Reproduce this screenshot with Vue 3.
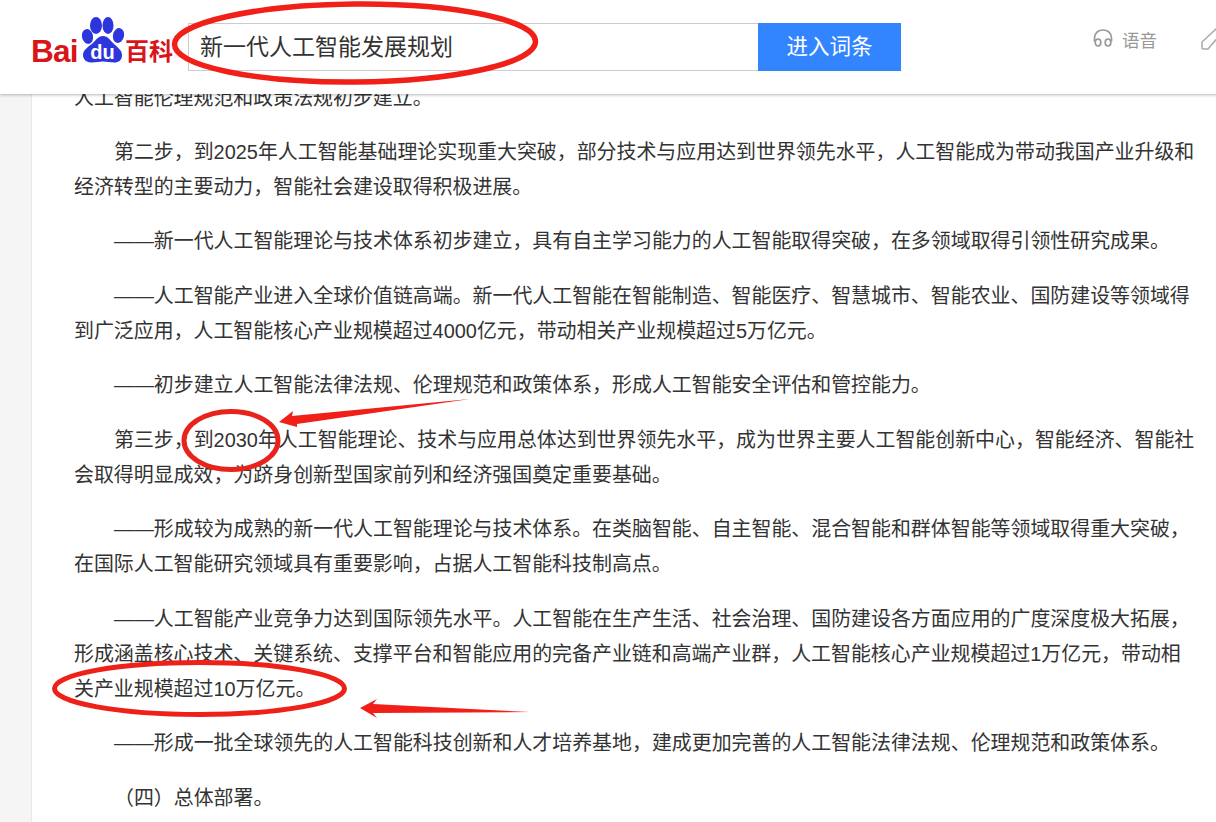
<script setup>
const paragraphs = [
  { text: '人工智能伦理规范和政策法规初步建立。', flush: true },
  { text: '第二步，到2025年人工智能基础理论实现重大突破，部分技术与应用达到世界领先水平，人工智能成为带动我国产业升级和经济转型的主要动力，智能社会建设取得积极进展。' },
  { text: '——新一代人工智能理论与技术体系初步建立，具有自主学习能力的人工智能取得突破，在多领域取得引领性研究成果。' },
  { text: '——人工智能产业进入全球价值链高端。新一代人工智能在智能制造、智能医疗、智慧城市、智能农业、国防建设等领域得到广泛应用，人工智能核心产业规模超过4000亿元，带动相关产业规模超过5万亿元。' },
  { text: '——初步建立人工智能法律法规、伦理规范和政策体系，形成人工智能安全评估和管控能力。' },
  { text: '第三步，到2030年人工智能理论、技术与应用总体达到世界领先水平，成为世界主要人工智能创新中心，智能经济、智能社会取得明显成效，为跻身创新型国家前列和经济强国奠定重要基础。' },
  { text: '——形成较为成熟的新一代人工智能理论与技术体系。在类脑智能、自主智能、混合智能和群体智能等领域取得重大突破，在国际人工智能研究领域具有重要影响，占据人工智能科技制高点。' },
  { text: '——人工智能产业竞争力达到国际领先水平。人工智能在生产生活、社会治理、国防建设各方面应用的广度深度极大拓展，形成涵盖核心技术、关键系统、支撑平台和智能应用的完备产业链和高端产业群，人工智能核心产业规模超过1万亿元，带动相关产业规模超过10万亿元。' },
  { text: '——形成一批全球领先的人工智能科技创新和人才培养基地，建成更加完善的人工智能法律法规、伦理规范和政策体系。' },
  { text: '（四）总体部署。' }
]
</script>

<template>
  <div class="page">
    <header class="topbar">
      <div class="logo">
        <span class="bai">Bai</span>
        <span class="paw">
          <svg width="46" height="46" viewBox="0 0 46 46">
            <ellipse cx="8.500" cy="19.500" rx="5.500" ry="7.500" fill="#2d35dc" transform="rotate(-12 8.500 19.500)" />
            <ellipse cx="17" cy="8.500" rx="6" ry="8.500" fill="#2d35dc" />
            <ellipse cx="29" cy="8.500" rx="5.500" ry="8.500" fill="#2d35dc" />
            <ellipse cx="39.500" cy="18.500" rx="5.500" ry="7.500" fill="#2d35dc" transform="rotate(12 39.500 18.500)" />
            <path d="M24 19C19 19 17 23 14 26C9 30 4 33 4 38C4 43 8 45.500 13 45.500C17 45.500 20 44.500 24 44.500C28 44.500 31 45.500 35 45.500C40 45.500 43 43 43 38C43 33 38 30 34 26C31 23 29 19 24 19Z" fill="#2d35dc" />
          </svg>
          <span class="du">du</span>
        </span>
        <span class="baike">百科</span>
      </div>
      <div class="search">
        <div class="search-input">新一代人工智能发展规划</div>
        <div class="search-btn">进入词条</div>
      </div>
      <div class="tool voice">
        <svg class="phones" width="20" height="18" viewBox="0 0 20 18" fill="none" stroke="#999" stroke-width="1.700">
          <path d="M1.500 12.500V9C1.500 4.300 5.200 1 10 1S18.500 4.300 18.500 9V12.500" />
          <ellipse cx="5" cy="13.500" rx="2.800" ry="3.500" />
          <ellipse cx="15" cy="13.500" rx="2.800" ry="3.500" />
        </svg>
        <span>语音</span>
      </div>
      <svg class="pencil" width="20" height="22" viewBox="0 0 20 22" fill="none" stroke="#aaa" stroke-width="1.500">
        <path d="M1 14L15 1L20 6L7 21H2Q1 21 1 20Z" />
      </svg>
    </header>

    <div class="body">
      <aside class="rail"></aside>
      <main class="article">
        <p v-for="(item, i) in paragraphs" :key="i" :class="{ flush: item.flush }">{{ item.text }}</p>
      </main>
    </div>

    <svg class="marks" width="1216" height="822" viewBox="0 0 1216 822" fill="none">
      <ellipse cx="355" cy="43" rx="180.500" ry="39" stroke="#f01f17" stroke-width="5.500" transform="rotate(-0.500 355 43)" />
      <ellipse cx="231" cy="440.500" rx="47" ry="29" stroke="#e8231c" stroke-width="5" />
      <ellipse cx="199.500" cy="688.500" rx="145" ry="26" stroke="#ee2119" stroke-width="5" />
      <path d="M279 422L293 411L292 416L470 399L297 424L297 427Z" fill="#f01f17" />
      <path d="M360 708L377 699L373 704L530 712L373 713L377 718Z" fill="#f01f17" />
    </svg>
  </div>
</template>

<style scoped>
.page {
  position: relative;
  width: 1216px;
  height: 822px;
  overflow: hidden;
  background: #fff;
  font-family: "Liberation Sans", "Noto Sans CJK SC", sans-serif;
  color: #333;
}
.topbar {
  position: relative;
  z-index: 2;
  display: flex;
  align-items: center;
  width: 1300px;
  height: 94px;
  padding-left: 30px;
  background: #fff;
  box-shadow: 0 1px 3px rgba(0, 0, 0, 0.28);
}
.logo {
  display: flex;
  flex: none;
  align-items: flex-end;
  width: 158px;
  height: 46px;
  margin-top: -14px;
}
.bai {
  flex: none;
  width: 48px;
  margin-left: 1px;
  font-size: 31.500px;
  line-height: 32px;
  font-weight: 700;
  color: #d8151a;
  letter-spacing: -0.800px;
  margin-bottom: -4.400px;
}
.paw {
  position: relative;
  width: 46px;
  height: 46px;
  flex: none;
}
.paw svg {
  display: block;
}
.du {
  position: absolute;
  left: 5px;
  right: 4px;
  top: 25px;
  text-align: center;
  font-size: 20px;
  line-height: 20px;
  font-weight: 700;
  color: #fff;
}
.baike {
  font-size: 24px;
  line-height: 24px;
  font-weight: 700;
  color: #d8151a;
  font-family: "Noto Sans CJK SC", sans-serif;
  margin-bottom: 1px;
}
.search {
  display: flex;
  flex: none;
  height: 48px;
  margin-top: -1px;
}
.search-input {
  box-sizing: border-box;
  width: 570px;
  height: 48px;
  padding-left: 11px;
  border: 1px solid #ccc;
  border-right: 0;
  font-size: 23px;
  line-height: 46px;
  color: #333;
}
.search-btn {
  width: 143px;
  height: 48px;
  background: #3385ff;
  color: #fff;
  text-align: center;
  font-size: 21.500px;
  line-height: 48px;
}
.tool {
  display: flex;
  flex: none;
  align-items: center;
  gap: 9px;
  margin-left: 192px;
  margin-top: -15px;
  font-size: 17.500px;
  white-space: nowrap;
  color: #999;
}
.phones {
  margin-top: -3px;
}
.pencil {
  flex: none;
  margin-left: 44px;
  margin-top: -16px;
}
.body {
  display: flex;
  margin-top: -13.400px;
}
.rail {
  flex: none;
  width: 31px;
  height: 760px;
  background: #f5f5f5;
  border-right: 1px solid #e8e8e8;
}
.article {
  flex: none;
  width: 1125px;
  margin-left: 42px;
  font-size: 19.930px;
  line-height: 35.250px;
}
.article p {
  margin: 0 0 19.050px;
  text-indent: 40px;
}
.article p.flush {
  text-indent: 0;
}
.marks {
  position: absolute;
  left: 0;
  top: 0;
  z-index: 3;
  pointer-events: none;
}
</style>

<style>
html,
body {
  margin: 0;
  overflow: hidden;
}
</style>
